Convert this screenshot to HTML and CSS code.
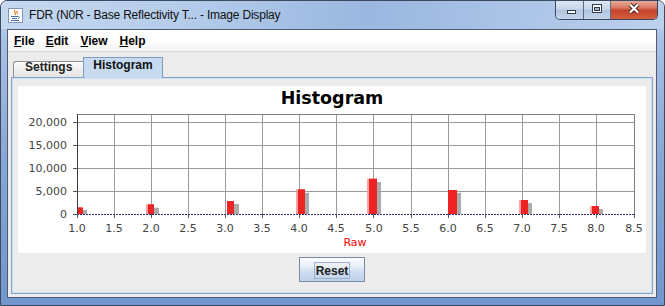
FILE: index.html
```html
<!DOCTYPE html>
<html lang="en">
<head>
    <meta charset="UTF-8">
    <title>Image Display</title>
    <link rel="stylesheet" href="styles.css">
</head>
<body>

    <div class="window">
        <!-- Title bar -->
        <div class="titlebar">
            <svg class="app-icon" width="15" height="15" viewBox="0 0 15 15">
                <rect x="0.5" y="0.5" width="14" height="14" fill="#fff" stroke="#8194b3"/>
                <path d="M7 2 C5 4 9 5 7 7 M9 3 C8 4 10 5 9 6" stroke="#e07a1c" stroke-width="1.2" fill="none"/>
                <path d="M3 8.5 H10 M10 8.5 C12 8.5 12 10.5 10 10.5 M4 10.5 H9 M3 12.5 H11" stroke="#4a6fa8" stroke-width="1" fill="none"/>
            </svg>
            <span class="title">FDR (N0R - Base Reflectivity T... - Image Display</span>
            <div class="caption">
                <span class="cap-btn cap-min">
                    <svg width="28" height="18" viewBox="0 0 28 18"><rect x="11.5" y="10.5" width="8" height="3" fill="#fff" stroke="#2e3b50"/></svg>
                </span>
                <span class="cap-btn cap-max">
                    <svg width="26" height="18" viewBox="0 0 26 18">
                        <rect x="8.5" y="4.5" width="9" height="8" fill="#fff" stroke="#2e3b50"/>
                        <rect x="10.5" y="7.5" width="5" height="3" fill="#9fb3cf" stroke="#2e3b50"/>
                    </svg>
                </span>
                <span class="cap-btn cap-close">
                    <svg width="46" height="18" viewBox="0 0 46 18">
                        <path d="M19 4.5 L27 12.5 M27 4.5 L19 12.5" stroke="#4a2219" stroke-width="4.2"/>
                        <path d="M19 4.5 L27 12.5 M27 4.5 L19 12.5" stroke="#fff" stroke-width="2.2"/>
                    </svg>
                </span>
            </div>
        </div>

        <div class="client">
            <!-- Menu bar -->
            <nav class="menubar">
                <span class="menu"><u>F</u>ile</span>
                <span class="menu"><u>E</u>dit</span>
                <span class="menu"><u>V</u>iew</span>
                <span class="menu"><u>H</u>elp</span>
            </nav>

            <div class="content">
                <div class="tabs">
                    <span class="tab">Settings</span>
                    <span class="tab active">Histogram</span>
                </div>

                <div class="panel">
                    <!-- Histogram chart -->
                    <svg class="chart" width="628" height="167" viewBox="0 0 628 167">
                        <text class="chart-title" x="314" y="18">Histogram</text>

                        <g class="grid">
                            <path d="M59 36.5 H616 M59 59.5 H616 M59 82.5 H616 M59 105.5 H616"/>
                            <path d="M96.5 28 V128 M133.5 28 V128 M170.5 28 V128 M207.5 28 V128 M244.5 28 V128 M281.5 28 V128 M318.5 28 V128 M355.5 28 V128 M393.5 28 V128 M430.5 28 V128 M467.5 28 V128 M504.5 28 V128 M541.5 28 V128 M578.5 28 V128"/>
                        </g>
                        <path class="plot-border" d="M59 28.5 H616.5 V128"/>

                        <!-- bars: red = this image, gray = reference -->
                        <g class="bars-gray">
                            <rect x="65" y="124" width="4" height="4"/>
                            <rect x="136" y="121.7" width="5" height="6.3"/>
                            <rect x="216" y="118" width="5" height="10"/>
                            <rect x="287" y="106.7" width="4" height="21.3"/>
                            <rect x="358" y="96" width="5" height="32"/>
                            <rect x="439" y="106.7" width="4" height="21.3"/>
                            <rect x="510" y="117" width="4" height="11"/>
                            <rect x="581" y="123" width="4" height="5"/>
                        </g>
                        <g class="bars-light">
                            <rect x="128" y="118.3" width="8" height="9.7"/>
                            <rect x="278" y="103.3" width="9" height="24.7"/>
                            <rect x="349" y="92.7" width="10" height="35.3"/>
                            <rect x="501" y="114" width="9" height="14"/>
                            <rect x="572" y="120" width="9" height="8"/>
                        </g>
                        <g class="bars-red">
                            <rect x="59" y="121.3" width="6" height="6.7"/>
                            <rect x="130" y="118.3" width="6" height="9.7"/>
                            <rect x="209" y="115" width="7" height="13"/>
                            <rect x="280" y="103.3" width="7" height="24.7"/>
                            <rect x="351" y="92.7" width="8" height="35.3"/>
                            <rect x="430" y="104" width="9" height="24"/>
                            <rect x="503" y="114" width="7" height="14"/>
                            <rect x="574" y="120" width="7" height="8"/>
                        </g>

                        <path class="baseline" d="M59 128.5 H616"/>
                        <path class="axis" d="M59.5 28 V132"/>
                        <path class="axis-ticks" d="M55 36.5 H59 M55 59.5 H59 M55 82.5 H59 M55 105.5 H59 M55 128.5 H59 M59.5 128 V132 M96.5 128 V132 M133.5 128 V132 M170.5 128 V132 M207.5 128 V132 M244.5 128 V132 M281.5 128 V132 M318.5 128 V132 M355.5 128 V132 M393.5 128 V132 M430.5 128 V132 M467.5 128 V132 M504.5 128 V132 M541.5 128 V132 M578.5 128 V132 M616.5 128 V132"/>

                        <g class="tick-y">
                            <text x="49" y="40">20,000</text>
                            <text x="49" y="63">15,000</text>
                            <text x="49" y="86">10,000</text>
                            <text x="49" y="109">5,000</text>
                            <text x="49" y="132">0</text>
                        </g>
                        <g class="tick-x">
                            <text x="59" y="146">1.0</text>
                            <text x="96" y="146">1.5</text>
                            <text x="133" y="146">2.0</text>
                            <text x="170" y="146">2.5</text>
                            <text x="207" y="146">3.0</text>
                            <text x="244" y="146">3.5</text>
                            <text x="281" y="146">4.0</text>
                            <text x="318" y="146">4.5</text>
                            <text x="356" y="146">5.0</text>
                            <text x="393" y="146">5.5</text>
                            <text x="430" y="146">6.0</text>
                            <text x="467" y="146">6.5</text>
                            <text x="504" y="146">7.0</text>
                            <text x="541" y="146">7.5</text>
                            <text x="578" y="146">8.0</text>
                            <text x="616" y="146">8.5</text>
                        </g>
                        <text class="axis-label" x="337" y="160">Raw</text>
                    </svg>

                    <button class="reset"><span>Reset</span></button>
                </div>
            </div>
        </div>
    </div>

</body>
</html>
```

FILE: styles.css
```css
/* Base */
body {
    margin: 0;
    padding: 0;
    font-family: "Liberation Sans", Arial, sans-serif;
    background: #fff;
}

/* Window frame */
.window {
    width: 665px;
    height: 306px;
    box-sizing: border-box;
    display: flex;
    flex-direction: column;
    border: 1px solid #3c4a5f;
    border-radius: 7px 7px 0 0;
    background: linear-gradient(to bottom, #c2d5ee 0, #a8c1e5 40px, #86a6d6 160px, #7196cd 100%);
    overflow: hidden;
}

.titlebar {
    height: 28px;
    flex: none;
    display: flex;
    align-items: flex-start;
    background: linear-gradient(100deg, #c5d8f0 0%, #b3cbea 30%, #9ab7e0 55%, #a9c2e6 75%, #bcd1ec 100%);
}

.app-icon {
    margin: 7px 0 0 7px;
    flex: none;
}

.title {
    margin: 7px 0 0 6px;
    font-size: 12px;
    line-height: 14px;
    letter-spacing: -0.2px;
    color: #111;
}

/* Min / max / close */
.caption {
    margin: -1px 6px 0 auto;
    display: flex;
    height: 19px;
    border: 1px solid #3a4760;
    border-top: none;
    border-radius: 0 0 5px 5px;
    overflow: hidden;
}

.cap-btn {
    display: block;
    height: 19px;
}
.cap-btn svg {
    display: block;
}

.cap-min, .cap-max {
    background: linear-gradient(to bottom, #e1e9f4 0, #c9d7ea 45%, #b1c5e0 55%, #c3d4ea 100%);
    border-right: 1px solid #5b6b86;
}
.cap-min {
    width: 27px;
}
.cap-max {
    width: 26px;
}
.cap-close {
    width: 46px;
    background: linear-gradient(to bottom, #eab0a2 0, #d97a62 40%, #c5432c 55%, #d2603f 100%);
}

/* Client area */
.client {
    flex: 1;
    margin: 0 7px 7px 6px;
    border: 1px solid #4f5c72;
    background: #ececec;
    display: flex;
    flex-direction: column;
}

.menubar {
    height: 22px;
    box-sizing: border-box;
    display: flex;
    padding-top: 2px;
    background: linear-gradient(to bottom, #fff 0, #fff 45%, #f2f2f2 100%);
    border-bottom: 1px solid #d6d6d6;
}

.menu {
    padding: 0 6px;
    font-size: 12px;
    font-weight: bold;
    line-height: 18px;
    color: #000;
}
.menu:nth-child(2) {
    padding-left: 5px;
}

/* Tabs */
.content {
    flex: 1;
    display: flex;
    flex-direction: column;
    padding: 6px 3px 3px 3px;
}

.tabs {
    display: flex;
    align-items: flex-end;
    height: 19px;
    padding-left: 2px;
    position: relative;
    z-index: 1;
}

.tab {
    padding: 0 11px 4px 11px;
    font-size: 12px;
    font-weight: bold;
    line-height: 11px;
    color: #222;
    border: 1px solid #8c919a;
    border-bottom: none;
    border-right: none;
    border-radius: 3px 0 0 0;
    background: linear-gradient(to bottom, #fbfbfb, #e3e3e3);
}

.tab.active {
    padding: 2px 9px 7px 9px;
    margin-bottom: -1px;
    border: 1px solid #7f9cc4;
    border-bottom: none;
    border-radius: 0;
    background: #c6daf1;
    color: #111;
}

.panel {
    flex: 1;
    display: flex;
    flex-direction: column;
    align-items: center;
    padding: 8px 6px 11px 6px;
    border: 1px solid #86a3ca;
    box-shadow: inset 0 0 0 1px #cfe0f3;
}

/* Chart */
.chart {
    display: block;
    background: #fff;
    font-family: "DejaVu Sans", sans-serif;
}

.chart-title {
    font-size: 17.5px;
    font-weight: bold;
    text-anchor: middle;
    fill: #000;
}

.grid path {
    stroke: #9a9a9a;
    stroke-width: 1;
    fill: none;
}

.plot-border {
    stroke: #7d7d7d;
    fill: none;
}

.bars-gray rect {
    fill: #9c9c9c;
    opacity: 0.85;
}
.bars-light rect {
    fill: #ff8c8c;
    opacity: 0.8;
}
.bars-red rect {
    fill: #ee2424;
}

.baseline {
    stroke: #2e2e7a;
    stroke-dasharray: 2 1;
}

.axis {
    stroke: #3c3c3c;
}
.axis-ticks {
    stroke: #555;
}

.tick-y text, .tick-x text {
    font-size: 11px;
    fill: #444;
}
.tick-y text {
    text-anchor: end;
}
.tick-x text {
    text-anchor: middle;
}

.axis-label {
    font-size: 11px;
    text-anchor: middle;
    fill: #ff0000;
}

/* Reset button */
.reset {
    margin-top: 4px;
    width: 66px;
    height: 25px;
    padding: 1px 0 0 0;
    border: 1px solid #7a8aa6;
    background: linear-gradient(to bottom, #fafcfe 0, #e9eff8 35%, #cedcee 60%, #bfd1e9 100%);
    font-family: "Liberation Sans", Arial, sans-serif;
    font-size: 12px;
    font-weight: bold;
    color: #222;
    cursor: pointer;
}

.reset span {
    display: inline-block;
    padding: 1px 1px 0 1px;
    line-height: 14px;
    border: 1px solid #9db2d2;
}
```
